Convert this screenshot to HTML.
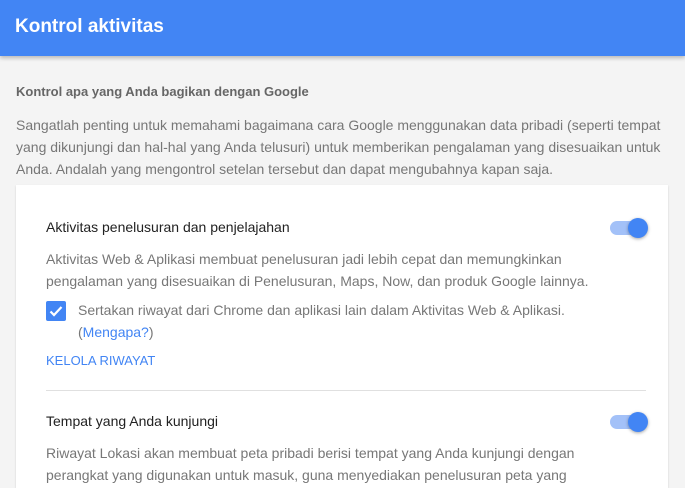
<!DOCTYPE html>
<html><head><style>
*{margin:0;padding:0;box-sizing:border-box}
html,body{width:685px;height:488px;overflow:hidden}
body{background:#f4f4f4;font-family:"Liberation Sans",sans-serif;position:relative}
.hdr{position:absolute;left:0;top:0;width:685px;height:56px;background:#4285f4;box-shadow:0 2px 4px rgba(0,0,0,.25)}
.hdr h1{position:absolute;left:15px;top:16px;font-size:19px;font-weight:bold;color:#fff}
.t{position:absolute;white-space:nowrap}
.card{position:absolute;left:16px;top:185px;width:652px;height:303px;background:#fff;box-shadow:0 1px 2px rgba(0,0,0,.15)}
.p{font-size:14px;color:#777;line-height:22px}
.h{font-size:14px;color:#222}
.tog{position:absolute;width:36px;height:14px;border-radius:7px;background:#a3c1f8}
.tog::after{content:"";position:absolute;right:-2px;top:-3px;width:20px;height:20px;border-radius:50%;background:#4285f4;box-shadow:0 1px 3px rgba(0,0,0,.35)}
</style></head><body>
<div class="hdr"><h1>Kontrol aktivitas</h1></div>
<div class="t" style="left:16px;top:84px;font-size:13px;font-weight:bold;color:#666">Kontrol apa yang Anda bagikan dengan Google</div>
<div class="t p" style="left:16px;top:114px">Sangatlah penting untuk memahami bagaimana cara Google menggunakan data pribadi (seperti tempat<br>yang dikunjungi dan hal-hal yang Anda telusuri) untuk memberikan pengalaman yang disesuaikan untuk<br>Anda. Andalah yang mengontrol setelan tersebut dan dapat mengubahnya kapan saja.</div>
<div class="card"></div>
<div class="t h" style="left:46px;top:219px">Aktivitas penelusuran dan penjelajahan</div>
<div class="tog" style="left:610px;top:221px"></div>
<div class="t p" style="left:46px;top:248px">Aktivitas Web &amp; Aplikasi membuat penelusuran jadi lebih cepat dan memungkinkan<br>pengalaman yang disesuaikan di Penelusuran, Maps, Now, dan produk Google lainnya.</div>
<div style="position:absolute;left:46px;top:301px;width:20px;height:20px;border-radius:2px;background:#4285f4"><svg width="20" height="20" viewBox="0 0 20 20"><path d="M4.5 10.5l3.5 3.5 7.5-8" stroke="#fff" stroke-width="2.2" fill="none"/></svg></div>
<div class="t p" style="left:78px;top:299px">Sertakan riwayat dari Chrome dan aplikasi lain dalam Aktivitas Web &amp; Aplikasi.<br>(<span style="color:#4285f4">Mengapa?</span>)</div>
<div class="t" style="left:46px;top:353px;font-size:13px;color:#4285f4">KELOLA RIWAYAT</div>
<div style="position:absolute;left:46px;top:390px;width:600px;height:1px;background:#e0e0e0"></div>
<div class="t h" style="left:46px;top:413px">Tempat yang Anda kunjungi</div>
<div class="tog" style="left:610px;top:415px"></div>
<div class="t p" style="left:46px;top:442px">Riwayat Lokasi akan membuat peta pribadi berisi tempat yang Anda kunjungi dengan<br>perangkat yang digunakan untuk masuk, guna menyediakan penelusuran peta yang<br>disempurnakan untuk perjalanan harian</div>
</body></html>
